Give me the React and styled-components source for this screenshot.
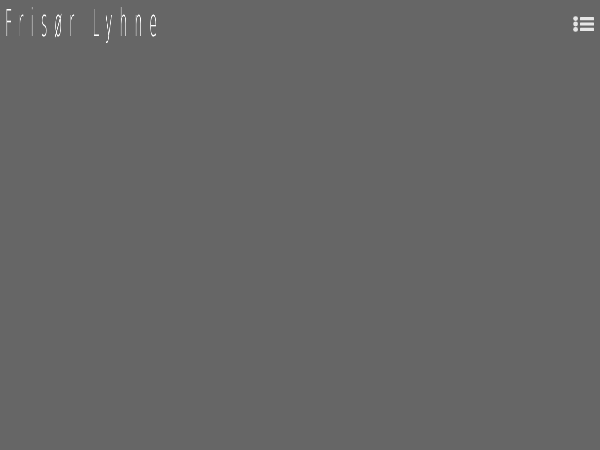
import styled, { createGlobalStyle } from "styled-components";

const GlobalStyle = createGlobalStyle`
  html, body {
    margin: 0;
    padding: 0;
    background: #666666;
    height: 100%;
  }
  #root {
    height: 100%;
  }
`;

const Page = styled.div`
  min-height: 450px;
  background: #666666;
  font-family: "DejaVu Sans", sans-serif;
`;

const Header = styled.header`
  display: flex;
  justify-content: space-between;
  align-items: flex-start;
  padding: 5px 6px 0 5px;
`;

const Logo = styled.a`
  display: inline-block;
  color: #ffffff;
  font-family: "DejaVu Sans", sans-serif;
  font-weight: 200;
  font-size: 37px;
  line-height: 38px;
  letter-spacing: 20.5px;
  white-space: nowrap;
  text-decoration: none;
  transform: scaleX(0.34) translateZ(0);
  transform-origin: left top;
  will-change: transform;
  -webkit-font-smoothing: antialiased;
  width: 160px;
`;

const MenuButton = styled.button`
  border: 0;
  background: transparent;
  padding: 0;
  margin-top: 11px;
  cursor: pointer;
  svg {
    display: block;
    width: 21px;
    height: 16px;
  }
`;

function ListIcon() {
  return (
    <svg viewBox="0 0 21 16" fill="#e6e6e6">
      <circle cx="2.6" cy="2.6" r="2.4" />
      <circle cx="2.6" cy="8" r="2.4" />
      <circle cx="2.6" cy="13.4" r="2.4" />
      <rect x="7" y="1" width="14" height="3.2" rx="0.5" />
      <rect x="7" y="6.4" width="14" height="3.2" rx="0.5" />
      <rect x="7" y="11.8" width="14" height="3.2" rx="0.5" />
    </svg>
  );
}

export default function App() {
  return (
    <>
      <GlobalStyle />
      <Page>
        <Header>
          <Logo href="#">Frisør Lyhne</Logo>
          <MenuButton aria-label="Menu">
            <ListIcon />
          </MenuButton>
        </Header>
      </Page>
    </>
  );
}
